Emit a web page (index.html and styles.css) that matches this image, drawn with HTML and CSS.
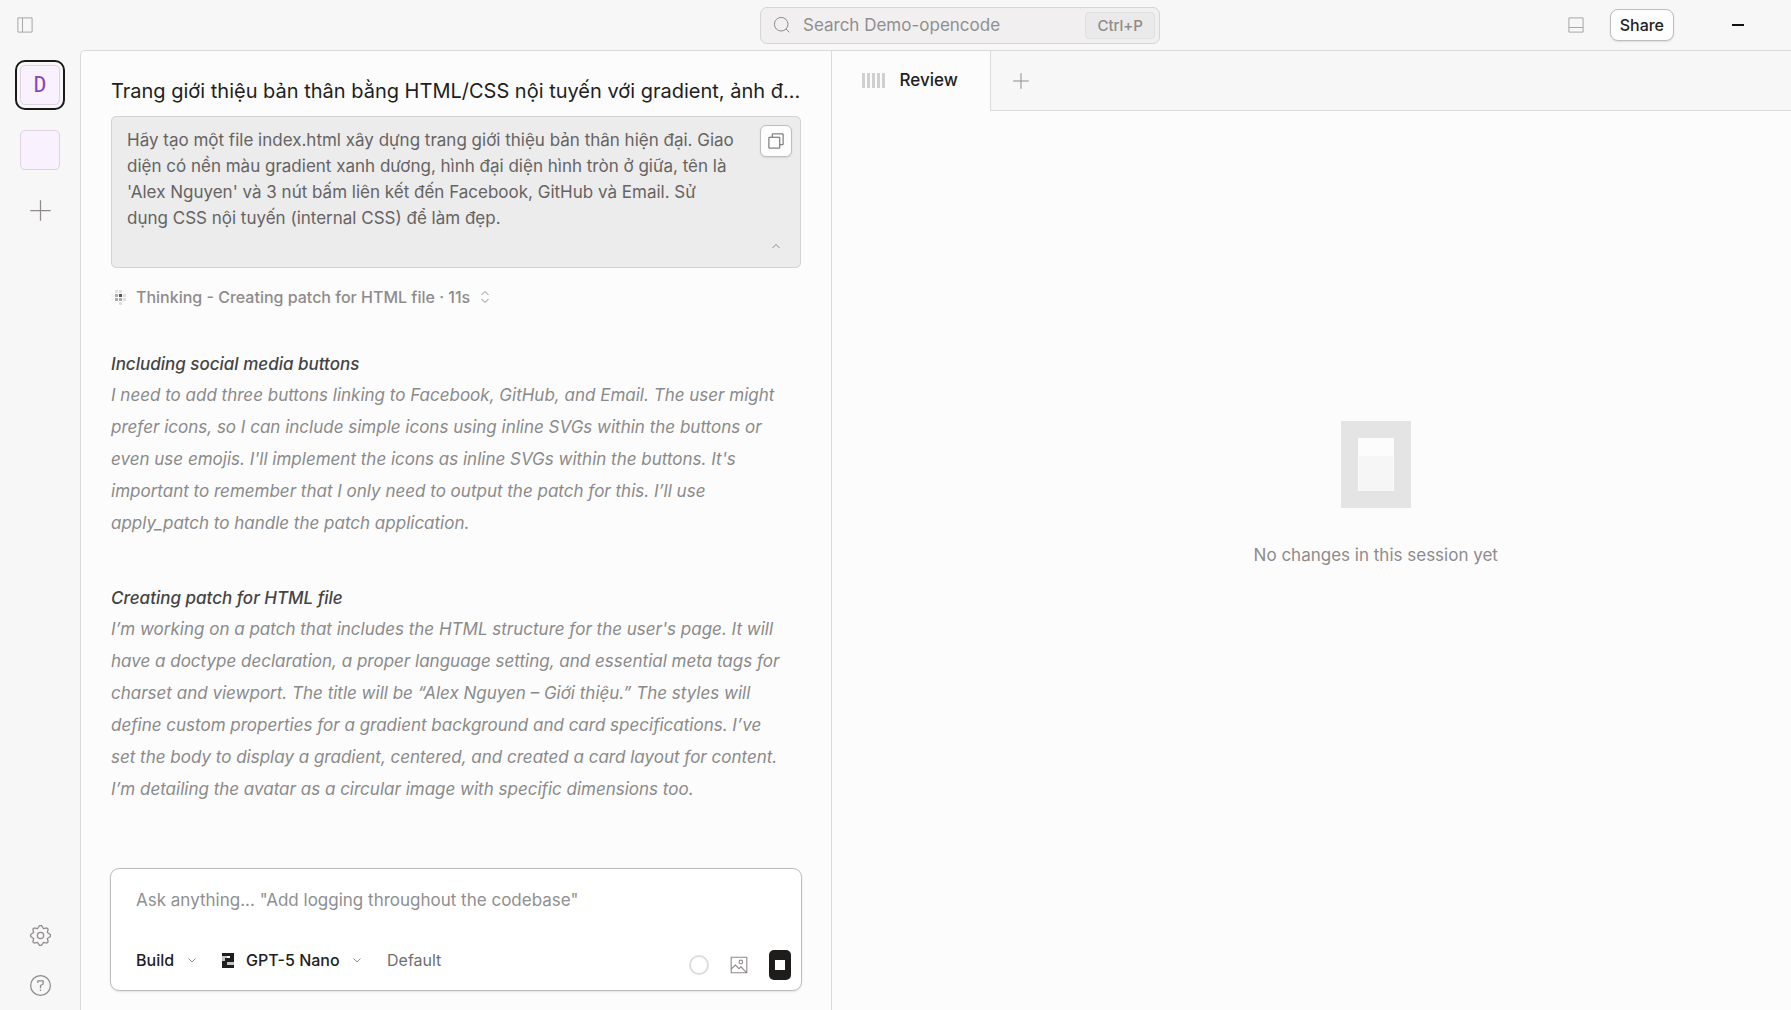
FILE: index.html
```html
<!DOCTYPE html>
<html lang="en">
<head>
    <meta charset="UTF-8">
    <meta name="viewport" content="width=device-width, initial-scale=1.0">
    <title>Demo-opencode</title>
    <link rel="stylesheet" href="styles.css">
</head>
<body>
    <header class="titlebar">
        <div class="titlebar-left">
            <button class="icon-btn muted" aria-label="Toggle sidebar">
                <svg class="icon-sm" viewBox="0 0 20 20"><path d="M2.9 2.9H17.1V17.1H2.9ZM7.5 2.9V17.1"/></svg>
            </button>
        </div>
        <label class="search">
            <svg class="icon-sm" viewBox="0 0 20 20"><circle cx="9.2" cy="9.2" r="6.8"/><path d="M14 14L17.4 17.4"/></svg>
            <input type="text" placeholder="Search Demo-opencode" aria-label="Search">
            <kbd>Ctrl+P</kbd>
        </label>
        <div class="titlebar-right">
            <button class="icon-btn muted" aria-label="Toggle terminal">
                <svg class="icon-sm" viewBox="0 0 20 20"><path d="M2.9 2.9H17.1V17.1H2.9ZM2.9 12.5H17.1"/></svg>
            </button>
            <button class="share-btn">Share</button>
            <button class="minimize-btn" aria-label="Minimize"><span></span></button>
        </div>
    </header>

    <div class="workspace">
        <nav class="rail">
            <button class="project active" aria-label="Demo-opencode"><span class="tile">D</span></button>
            <button class="project" aria-label="Other project"><span class="tile"></span></button>
            <button class="icon-btn" aria-label="Open project">
                <svg class="icon" viewBox="0 0 20 20"><path d="M10 1.8V18.2M1.8 10H18.2"/></svg>
            </button>
            <div class="rail-bottom">
                <button class="icon-btn" aria-label="Settings">
                    <svg class="icon" viewBox="0 0 20 20"><path d="M7.6 4.5L5 3.9L3.9 5L4.5 7.6L2.1 9.2V10.8L4.5 12.4L3.9 15L5 16.1L7.6 15.5L9.2 17.9H10.8L12.4 15.5L15 16.1L16.1 15L15.5 12.4L17.9 10.8V9.2L15.5 7.6L16.1 5L15 3.9L12.4 4.5L10.8 2.1H9.2Z"/><circle cx="10" cy="10" r="2.5"/></svg>
                </button>
                <button class="icon-btn" aria-label="Help">
                    <svg class="icon" viewBox="0 0 20 20"><circle cx="10" cy="10" r="7.9"/><path d="M7.9 7.9V6.25H12.1V8.75L10 10V12.1M10 13.2V14.3"/></svg>
                </button>
            </div>
        </nav>

        <main class="panels">
            <section class="session">
                <h1>Trang giới thiệu bản thân bằng HTML/CSS nội tuyến với gradient, ảnh đ...</h1>

                <div class="prompt-card">
                    <p>Hãy tạo một file index.html xây dựng trang giới thiệu bản thân hiện đại. Giao diện có nền màu gradient xanh dương, hình đại diện hình tròn ở giữa, tên là 'Alex Nguyen' và 3 nút bấm liên kết đến Facebook, GitHub và Email. Sử dụng CSS nội tuyến (internal CSS) để làm đẹp.</p>
                    <div class="prompt-actions">
                        <button class="copy-btn" aria-label="Copy">
                            <svg class="icon-sm" viewBox="0 0 20 20"><path d="M6.25 6.25V2.9H17.1V13.75H13.75M13.75 6.25V17.1H2.9V6.25Z"/></svg>
                        </button>
                        <button class="collapse-btn" aria-label="Collapse">
                            <svg class="chevron" viewBox="0 0 10 10"><path d="M1.5 7L5 3.5L8.5 7"/></svg>
                        </button>
                    </div>
                </div>

                <button class="status">
                    <svg class="spinner" viewBox="0 0 15 15">
                        <g class="dot-light"><rect x="4" width="3" height="3"/><rect x="8" width="3" height="3"/><rect x="12" y="4" width="3" height="3"/><rect x="12" y="8" width="3" height="3"/><rect x="8" y="12" width="3" height="3"/></g>
                        <g class="dot-faint"><rect y="4" width="3" height="3"/><rect y="8" width="3" height="3"/></g>
                        <g class="dot-mid"><rect x="4" y="4" width="3" height="3"/><rect x="4" y="8" width="3" height="3"/><rect x="8" y="8" width="3" height="3"/></g>
                        <rect class="dot-dark" x="8" y="4" width="3" height="3"/>
                    </svg>
                    <span>Thinking - Creating patch for HTML file · 11s</span>
                    <svg class="updown" viewBox="0 0 10 14"><path d="M1.5 5L5 1.5L8.5 5M1.5 9L5 12.5L8.5 9"/></svg>
                </button>

                <div class="reasoning">
                    <article>
                        <h2>Including social media buttons</h2>
                        <p>I need to add three buttons linking to Facebook, GitHub, and Email. The user might prefer icons, so I can include simple icons using inline SVGs within the buttons or even use emojis. I'll implement the icons as inline SVGs within the buttons. It's important to remember that I only need to output the patch for this. I’ll use apply_patch to handle the patch application.</p>
                    </article>
                    <article>
                        <h2>Creating patch for HTML file</h2>
                        <p>I’m working on a patch that includes the HTML structure for the user's page. It will have a doctype declaration, a proper language setting, and essential meta tags for charset and viewport. The title will be “Alex Nguyen – Giới thiệu.” The styles will define custom properties for a gradient background and card specifications. I’ve set the body to display a gradient, centered, and created a card layout for content. I’m detailing the avatar as a circular image with specific dimensions too.</p>
                    </article>
                </div>

                <form class="composer">
                    <textarea rows="1" aria-label="Message" placeholder="Ask anything... &quot;Add logging throughout the codebase&quot;"></textarea>
                    <div class="composer-bar">
                        <div class="picker">
                            <select aria-label="Agent"><option>Build</option></select>
                            <svg class="chevron" viewBox="0 0 10 10"><path d="M1.5 3.5L5 7L8.5 3.5"/></svg>
                        </div>
                        <div class="picker">
                            <svg class="model-logo" viewBox="0 0 12 15">
                                <path class="logo-grey" d="M0 3H5V5H0ZM5 9H12V12H5ZM0 5H3V9H0Z"/>
                                <path class="logo-ink" d="M0 0H12V9H5V12H12V15H0V8H3V5H8V3H0Z"/>
                            </svg>
                            <select aria-label="Model"><option>GPT-5 Nano</option></select>
                            <svg class="chevron" viewBox="0 0 10 10"><path d="M1.5 3.5L5 7L8.5 3.5"/></svg>
                        </div>
                        <select class="variant" aria-label="Variant"><option>Default</option></select>
                        <div class="composer-actions">
                            <span class="context-ring"></span>
                            <button type="button" class="icon-btn" aria-label="Attach image">
                                <svg class="icon-md" viewBox="0 0 20 20"><path d="M2.9 2.9H17.1V17.1H2.9ZM16.7 16.7L11.7 11.7L10 13.3L6.7 10L3.1 13.6"/><circle cx="11.7" cy="7.2" r="1.6"/></svg>
                            </button>
                            <button type="button" class="stop-btn" aria-label="Stop"><span></span></button>
                        </div>
                    </div>
                </form>
            </section>

            <section class="review">
                <div class="tabs">
                    <button class="tab">
                        <span class="bars"><i></i><i></i><i></i><i></i><i></i></span>
                        Review
                    </button>
                    <div class="tabs-rest">
                        <button class="icon-btn" aria-label="New tab">
                            <svg class="icon-sm" viewBox="0 0 20 20"><path d="M10 2.2V17.8M2.2 10H17.8"/></svg>
                        </button>
                    </div>
                </div>
                <div class="empty">
                    <svg class="empty-mark" viewBox="0 0 70 87">
                        <path class="mark-frame" d="M0 0H70V87H0ZM17 17V70H53V17Z"/>
                        <rect class="mark-core" x="18" y="35" width="34" height="35"/>
                    </svg>
                    <p>No changes in this session yet</p>
                </div>
            </section>
        </main>
    </div>
</body>
</html>
```
FILE: styles.css
```css
* {
    margin: 0;
    padding: 0;
    box-sizing: border-box;
}

body {
    height: 100vh;
    display: flex;
    flex-direction: column;
    background-color: #f7f7f7;
    color: #211e1e;
    font-family: Inter, sans-serif;
    font-size: 17px;
}

button,
input,
select,
textarea {
    border: none;
    outline: none;
    background: none;
    color: inherit;
    font: inherit;
}

button {
    cursor: pointer;
}

svg {
    display: block;
    flex-shrink: 0;
    fill: none;
    stroke: currentColor;
}

.icon {
    width: 25px;
    height: 25px;
}

.icon-md {
    width: 22px;
    height: 22px;
}

.icon-sm {
    width: 20px;
    height: 20px;
}

.chevron {
    width: 10px;
    height: 10px;
    color: #8f8b8b;
}

.icon-btn {
    display: flex;
    color: #8f8b8b;
}

.icon-btn.muted {
    color: #a8a6a6;
}

/* Title bar */
.titlebar {
    height: 50px;
    display: grid;
    grid-template-columns: 760fr 400px 631fr;
    align-items: center;
}

.titlebar-left {
    padding-left: 15px;
}

.search {
    height: 37px;
    display: flex;
    align-items: center;
    gap: 11px;
    padding: 0 4px 0 11px;
    border: 1px solid #d6d4d4;
    border-radius: 7px;
    background-color: #f1efef;
    color: #8f8b8b;
}

.search input {
    flex: 1;
    min-width: 0;
}

.search input::placeholder,
.composer textarea::placeholder {
    color: #8f8f8f;
    opacity: 1;
}

.search kbd {
    padding: 0 11px;
    border: 1px solid #e0dfdf;
    border-radius: 4px;
    background-color: #ebeaea;
    font-family: inherit;
    font-size: 15px;
    font-weight: 500;
    line-height: 25px;
}

.titlebar-right {
    display: flex;
    align-items: center;
    justify-content: flex-end;
    padding-right: 37px;
}

.share-btn {
    height: 32px;
    margin-left: 24px;
    padding: 0 9px;
    border: 1px solid #bdbdbd;
    border-radius: 8px;
    background-color: #fdfdfd;
    box-shadow: 0 1px 2px rgba(0, 0, 0, 0.1);
    font-size: 16px;
    font-weight: 500;
}

.minimize-btn {
    margin-left: 48px;
    padding: 10px;
}

.minimize-btn span {
    display: block;
    width: 12px;
    height: 2px;
    background-color: #111111;
}

/* Project rail */
.workspace {
    flex: 1;
    display: flex;
    min-height: 0;
}

.rail {
    width: 80px;
    display: flex;
    flex-direction: column;
    align-items: center;
    gap: 15px;
    padding: 10px 0 12px;
}

.project {
    padding: 3px;
    border: 2px solid transparent;
    border-radius: 10px;
}

.project.active {
    border-color: #1c1919;
}

.tile {
    width: 40px;
    height: 40px;
    display: flex;
    align-items: center;
    justify-content: center;
    border: 1px solid #e0d2e2;
    border-radius: 5px;
    background-color: #f9f1fe;
    color: #8445bc;
    font-family: "DejaVu Sans Mono", monospace;
    font-size: 21px;
}

.rail > .icon-btn {
    margin-top: 8px;
}

.rail-bottom {
    display: flex;
    flex-direction: column;
    gap: 25px;
    margin-top: auto;
}

.panels {
    flex: 1;
    min-width: 0;
    display: grid;
    grid-template-columns: 751fr 960fr;
    border-top: 1px solid #dadada;
    border-left: 1px solid #dadada;
    border-top-left-radius: 5px;
    background-color: #fcfcfc;
}

/* Session */
.session {
    min-width: 0;
    display: flex;
    flex-direction: column;
    padding: 24px 30px 19px;
    border-right: 1px solid #dadada;
}

h1 {
    font-size: 20px;
    font-weight: 400;
    line-height: 32px;
    white-space: nowrap;
}

.prompt-card {
    display: flex;
    justify-content: space-between;
    margin-top: 9px;
    padding: 8px;
    border: 1px solid #d3d3d3;
    border-radius: 5px;
    background-color: #ececec;
    color: #656363;
}

.prompt-card p {
    padding: 2px 20px 28px 7px;
    line-height: 26px;
}

.prompt-actions {
    display: flex;
    flex-direction: column;
    align-items: center;
    justify-content: space-between;
}

.copy-btn {
    padding: 5px;
    border: 1px solid #bdbdbd;
    border-radius: 6px;
    background-color: #fdfdfd;
    color: #656363;
    box-shadow: 0 1px 2px rgba(0, 0, 0, 0.1);
}

.collapse-btn {
    padding: 8px;
}

.status {
    align-self: flex-start;
    display: flex;
    align-items: center;
    gap: 10px;
    margin-top: 16px;
    color: #8f8b8b;
    font-size: 16px;
    font-weight: 500;
    line-height: 26px;
}

.spinner {
    width: 15px;
    height: 15px;
    stroke: none;
}

.dot-faint {
    fill: #f4f4f4;
}

.dot-light {
    fill: #e0e0e0;
}

.dot-mid {
    fill: #aaaaaa;
}

.dot-dark {
    fill: #555555;
}

.updown {
    width: 10px;
    height: 14px;
}

.reasoning {
    flex: 1;
    display: flex;
    flex-direction: column;
    gap: 44px;
    margin-top: 39px;
    padding-right: 14px;
    color: #8a8a8a;
    font-style: italic;
    line-height: 32px;
}

.reasoning h2 {
    color: #444444;
    font-size: 17px;
    font-weight: 500;
    line-height: 30px;
}

/* Composer */
.composer {
    margin: 0 -1px;
    padding: 16px 10px 10px 25px;
    border: 1px solid #bdbdbd;
    border-radius: 9px;
    background-color: #ffffff;
    box-shadow: 0 1px 2px rgba(0, 0, 0, 0.1);
}

.composer textarea {
    width: 100%;
    display: block;
    height: 32px;
    line-height: 30px;
    resize: none;
}

.composer-bar {
    display: flex;
    align-items: flex-start;
    margin-top: 33px;
}

.picker {
    display: flex;
    align-items: center;
    margin-right: 25px;
}

.picker .chevron {
    margin-left: 12px;
}

.composer select {
    appearance: none;
    font-size: 16px;
    font-weight: 500;
    line-height: 20px;
}

.composer .variant {
    color: #6f6f6f;
    font-weight: 400;
}

.model-logo {
    width: 12px;
    height: 15px;
    margin-right: 12px;
    stroke: none;
}

.logo-grey {
    fill: #c4c4c4;
}

.logo-ink {
    fill: #211e1e;
}

.composer-actions {
    display: flex;
    align-items: center;
    gap: 19px;
    margin-left: auto;
}

.context-ring {
    width: 20px;
    height: 20px;
    border: 2px solid #dddddd;
    border-radius: 50%;
}

.stop-btn {
    width: 22px;
    height: 30px;
    display: flex;
    align-items: center;
    justify-content: center;
    border-radius: 5px;
    background-color: #1f1d1c;
}

.stop-btn span {
    width: 10px;
    height: 10px;
    background-color: #ffffff;
}

/* Review */
.review {
    display: flex;
    flex-direction: column;
}

.tabs {
    height: 60px;
    display: flex;
}

.tab {
    display: flex;
    align-items: center;
    gap: 15px;
    padding: 0 32px 2px 30px;
    font-weight: 500;
}

.bars {
    display: flex;
    gap: 2px;
}

.bars i {
    width: 3px;
    height: 15px;
    background-color: #d0d0d0;
}

.tabs-rest {
    flex: 1;
    display: flex;
    align-items: center;
    padding-left: 20px;
    border-left: 1px solid #dadada;
    border-bottom: 1px solid #dadada;
    background-color: #f7f7f7;
}

.empty {
    flex: 1;
    display: flex;
    flex-direction: column;
    align-items: center;
    gap: 32px;
    padding: 310px 0 0 129px;
    color: #8f8b8b;
    line-height: 30px;
}

.empty-mark {
    width: 70px;
    height: 87px;
    stroke: none;
}

.mark-frame {
    fill: #e4e4e4;
    fill-rule: evenodd;
}

.mark-core {
    fill: #f6f6f6;
}
```
